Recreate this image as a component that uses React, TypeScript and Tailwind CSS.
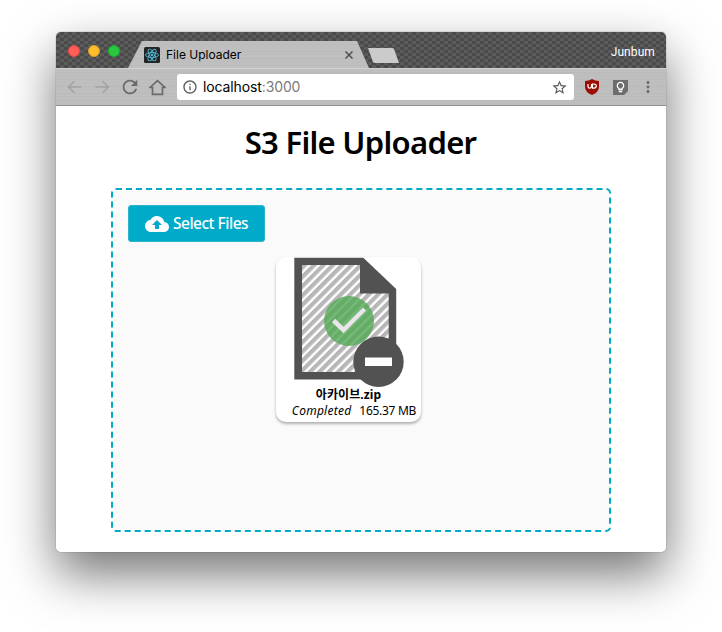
import React from "react";
import { MdCloudUpload, MdStarBorder, MdRefresh, MdMoreVert, MdInfoOutline } from "react-icons/md";

const metal =
  "bg-[repeating-linear-gradient(180deg,#c2c2c2_0px,#bbbbbb_1px,#c3c3c3_2px,#b9b9b9_3px,#c0c0c0_5px,#bcbcbc_7px)]";

function ReactLogo() {
  return (
    <svg className="size-4 shrink-0" viewBox="0 0 16 16">
      <rect width="16" height="16" rx="1.5" fill="#222426" />
      <g fill="none" stroke="#53b9d4" strokeWidth="0.9">
        <ellipse cx="8" cy="8" rx="6.5" ry="2.5" />
        <ellipse cx="8" cy="8" rx="6.5" ry="2.5" transform="rotate(60 8 8)" />
        <ellipse cx="8" cy="8" rx="6.5" ry="2.5" transform="rotate(120 8 8)" />
      </g>
      <circle cx="8" cy="8" r="1.3" fill="#53b9d4" />
    </svg>
  );
}

function TitleBar() {
  return (
    <div className="flex h-9 items-end bg-[repeating-conic-gradient(#4a4a4a_0_25%,#5b5b5b_0_50%)] bg-[length:8px_6px]">
      <div className="flex h-full w-[72px] items-center gap-2 pb-px pl-3 pt-[3px]">
        <i className="size-3 rounded-full border border-[#e2463f] bg-[#ff5f57]" />
        <i className="size-3 rounded-full border border-[#dfa023] bg-[#ffbd2e]" />
        <i className="size-3 rounded-full border border-[#1aab29] bg-[#28c940]" />
      </div>
      <div className={`flex h-[27px] w-[241px] items-center pl-4 pr-4 [clip-path:polygon(14px_0,229px_0,241px_100%,0_100%)] ${metal}`}>
        <ReactLogo />
        <span className="ml-1.5 flex-1 whitespace-nowrap font-['Inter',sans-serif] text-[12px] text-black">File Uploader</span>
        <svg className="size-2" viewBox="0 0 8 8">
          <path d="M0.500 0.500L7.500 7.500M7.500 0.500L0.500 7.500" stroke="#505050" strokeWidth="1.5" />
        </svg>
      </div>
      <svg className="mb-[5px] ml-[-2px] h-[15px] w-8" viewBox="0 0 32 15">
        <path d="M1 0H25Q26.500 0 27 1L32 15H8Q6.500 15 6 14Z" fill="#cbcbcb" />
      </svg>
      <span className="ml-auto self-center pr-[11px] pt-[3px] text-[12px] tracking-[0.1px] text-white">Junbum</span>
    </div>
  );
}

function Toolbar() {
  return (
    <div className={`flex h-[38px] items-center border-b border-t border-b-[#8f8f8f] border-t-[#d2d2d2] pl-[11px] text-[#6b6b6b] ${metal}`}>
      <svg className="h-[14px] w-[15px]" viewBox="0 0 15 14">
        <path d="M14.500 7H1.500M7.500 1L1.500 7L7.500 13" fill="none" stroke="#a2a2a2" strokeWidth="1.5" />
      </svg>
      <svg className="ml-[13px] h-[14px] w-[15px]" viewBox="0 0 15 14">
        <path d="M0.500 7H13.500M7.500 1L13.500 7L7.500 13" fill="none" stroke="#a2a2a2" strokeWidth="1.5" />
      </svg>
      <MdRefresh className="ml-[9px] size-[22px]" />
      <svg className="ml-2 size-[17px]" viewBox="0 0 16 16">
        <path d="M1 8L8 1.500L15 8H12.700V14.500H3.300V8Z" fill="none" stroke="currentColor" strokeWidth="1.600" />
      </svg>
      <div className="ml-[11px] flex h-[26px] w-[397px] items-center rounded-[3px] bg-white pl-[5px] pr-[6px]">
        <MdInfoOutline className="size-4 text-[#5a5a5a]" />
        <span className="ml-[5px] flex-1 pb-px font-['Inter',sans-serif] text-[14px] tracking-[-0.12px] text-black">
          localhost<span className="text-[#7b7b7b]">:3000</span>
        </span>
        <MdStarBorder className="size-[17px] text-[#5a5a5a]" />
      </div>
      <svg className="ml-[11px] h-4 w-[14px]" viewBox="0 0 14 16">
        <path d="M7 0Q10 2 14 2V8Q14 13 7 16Q0 13 0 8V2Q4 2 7 0Z" fill="#9b0c05" />
        <path d="M3 5V7.500Q3 9.200 4.700 9.200T6.500 7.500V5M7.500 5V9.200H9Q11.300 9 11.300 7.100T9 5Z" fill="none" stroke="white" strokeWidth="1.200" />
      </svg>
      <svg className="ml-[14px] size-[15px]" viewBox="0 0 15 15">
        <path d="M0 0H15V11L11 15H0Z" fill="#6d6d6d" />
        <path d="M6 9.500V8.500A3.200 3.200 0 1 1 9 8.500V9.500Z" fill="none" stroke="white" strokeWidth="1.300" />
        <path d="M5.800 11.500H9.200" stroke="white" strokeWidth="1.500" />
      </svg>
      <MdMoreVert className="ml-[11px] size-[18px]" />
    </div>
  );
}

function FileIcon() {
  return (
    <svg className="ml-[18px] block h-[130px] w-[110px] shrink-0" viewBox="294 257 110 130">
      <defs>
        <pattern id="stripes" width="6.600" height="6.600" patternUnits="userSpaceOnUse" patternTransform="translate(302 265) rotate(45)">
          <rect width="6.600" height="6.600" fill="white" />
          <rect width="4.200" height="6.600" fill="#b7b7b7" />
        </pattern>
      </defs>
      <path d="M294.300 257.700H363.300L396.200 289V379.500H294.300Z" fill="#525252" />
      <path d="M302 265H360V293.500H388.700V372H302Z" fill="url(#stripes)" />
      <circle cx="349" cy="321" r="25" fill="#52a855" fillOpacity="0.8" />
      <path d="M333.500 320.500L343.500 330L364.500 309" fill="none" stroke="#e9e5e9" strokeWidth="4.500" />
      <circle cx="378.500" cy="361.800" r="25.200" fill="#525252" />
      <path d="M365 357.500H392V366H365Z" fill="white" />
    </svg>
  );
}

export default function App() {
  return (
    <div className="h-[632px] w-[722px] overflow-hidden bg-white pl-14 pt-8 font-['Roboto','Noto_Sans_CJK_KR',sans-serif]">
      <div className="h-[520px] w-[610px] rounded-[5px] shadow-[0_0_1px_rgba(0,0,0,0.7),0_22px_50px_rgba(0,0,0,0.55)]">
        <div className="h-full overflow-hidden rounded-[5px] bg-white">
          <TitleBar />
          <Toolbar />
          <main className="flex flex-col items-center font-['Noto_Sans','Noto_Sans_CJK_KR',sans-serif] text-black">
            <h1 className="mt-[13px] h-[69px] whitespace-nowrap pr-px text-[31px] font-semibold leading-[47px] tracking-[-0.7px]">S3 File Uploader</h1>
            <section className="h-[344px] w-[500px] rounded-[5px] border-2 border-dashed border-[#00abc9] bg-[#fafafa] p-[15px]">
              <button className="flex h-[37px] w-[137px] items-center rounded-[3px] border border-[#2bb5cd] bg-[#00abc9] pl-4 text-white">
                <MdCloudUpload className="size-6" />
                <span className="ml-1 whitespace-nowrap text-[15.500px] font-medium tracking-[-0.500px]">Select Files</span>
              </button>
              <article className="ml-[148px] mt-[15px] flex h-[165px] w-[145px] flex-col rounded-[10px] bg-white shadow-[0_2px_3px_rgba(0,0,0,0.3)]">
                <FileIcon />
                <p className="-mt-px h-[17px] text-center text-[12px] font-bold leading-[17px] tracking-[0.1px]">아카이브.zip</p>
                <p className="flex h-4 justify-end gap-2 whitespace-nowrap pr-[5px] text-[12px] leading-[16px]">
                  <em className="tracking-[0.25px]">Completed</em>
                  <span className="tracking-[-0.3px]">165.37 MB</span>
                </p>
              </article>
            </section>
          </main>
        </div>
      </div>
    </div>
  );
}
